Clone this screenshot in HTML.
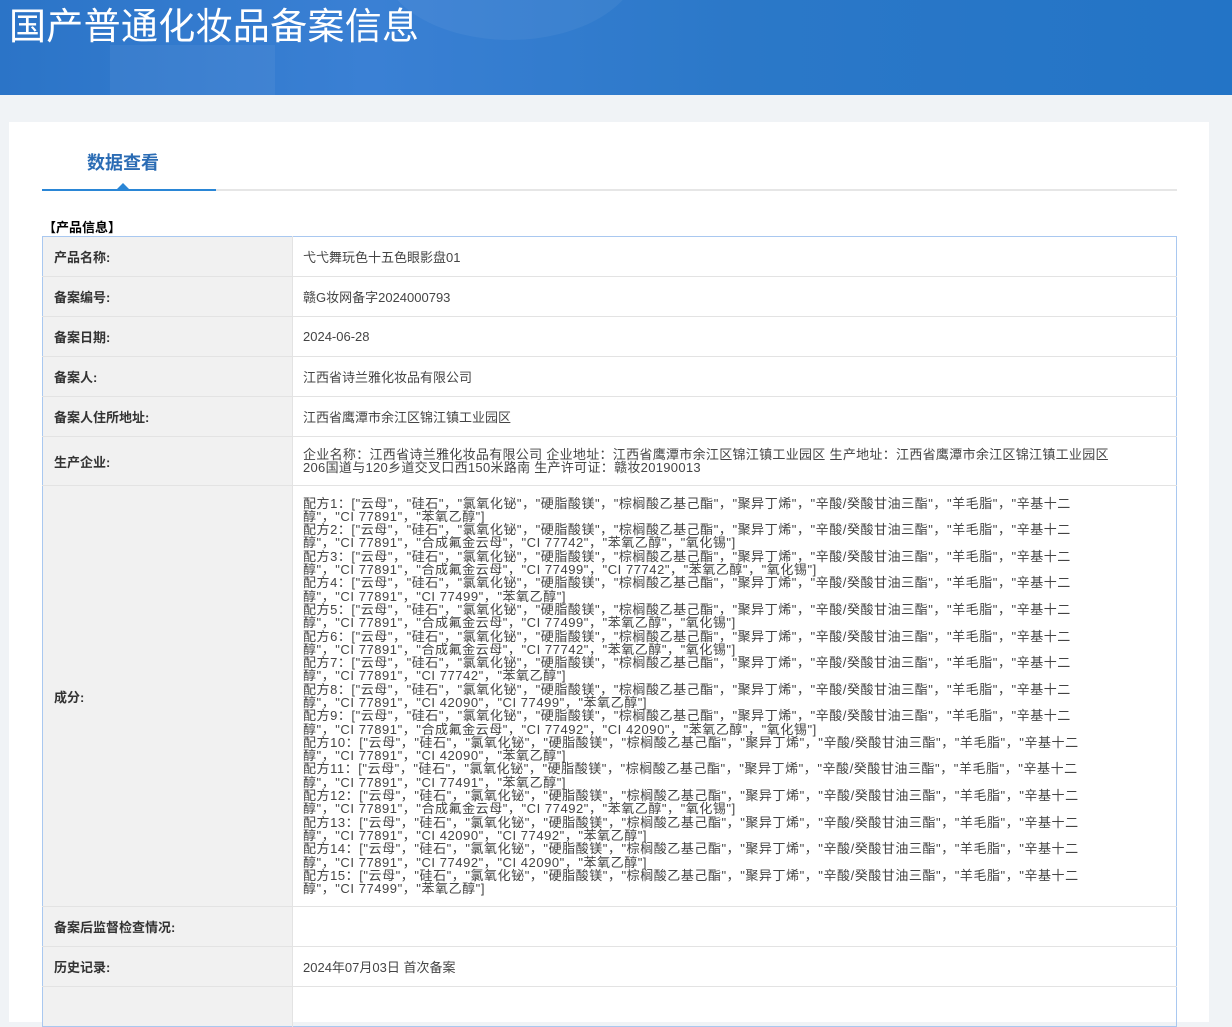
<!DOCTYPE html>
<html><head><meta charset="utf-8"><style>
*{margin:0;padding:0;box-sizing:border-box}
body{width:1232px;height:989px;overflow:hidden;background:#f0f3f6;font-family:"Liberation Sans","Noto Sans CJK SC",sans-serif;color:#333}
.hd{position:absolute;left:0;top:0;width:1232px;height:95px;background:linear-gradient(90deg,#2b74c7 0%,#3a80d4 30%,#2b78c8 60%,#2374c6 100%);overflow:hidden}
.hd .c1{position:absolute;left:380px;top:-120px;width:260px;height:160px;border-radius:50%;background:rgba(255,255,255,0.05)}
.hd .c2{position:absolute;left:110px;top:45px;width:165px;height:60px;background:rgba(255,255,255,0.05)}
.hd h1{position:absolute;left:9px;top:-4px;font-size:37px;font-weight:normal;color:#fff;white-space:nowrap;letter-spacing:0.3px}
.card{position:absolute;left:9px;top:122px;width:1200px;height:900px;background:#fff}
.tab{position:absolute;left:78px;top:27px;font-size:18px;font-weight:bold;color:#2b6cb4}
.line{position:absolute;left:33px;top:67px;width:1135px;height:2px;background:#e6e6e6}
.line b{position:absolute;left:0;top:0;width:174px;height:2px;background:#2a86d6}
.tri{position:absolute;left:108px;top:61px;width:0;height:0;border-left:6px solid transparent;border-right:6px solid transparent;border-bottom:6px solid #2a86d6}
.sec{position:absolute;left:34px;top:95px;font-size:13px;font-weight:bold;color:#000}
table{position:absolute;left:33px;top:114px;width:1135px;border-collapse:collapse;border:1px solid #a9c8f0;font-size:13px}
td{border-top:1px solid #e3e3e3;height:40px;vertical-align:middle}
td.l{width:250px;background:#f1f1f1;font-weight:bold;padding-left:11px;color:#333;border-right:1px solid #e3e3e3}
td.v{padding-left:10px;color:#444}
.ml{line-height:13.3px;padding-top:10px;padding-bottom:10px;white-space:nowrap;letter-spacing:0.55px}
</style></head><body>
<div class="hd"><div class="c1"></div><div class="c2"></div><h1>国产普通化妆品备案信息</h1></div>
<div class="card">
<div class="tab">数据查看</div>
<div class="line"><b></b></div><div class="tri"></div>
<div class="sec">【产品信息】</div>
<table>
<tr><td class="l" style="border-top:none">产品名称:</td><td class="v" style="border-top:none">弋弋舞玩色十五色眼影盘01</td></tr>
<tr><td class="l">备案编号:</td><td class="v">赣G妆网备字2024000793</td></tr>
<tr><td class="l">备案日期:</td><td class="v">2024-06-28</td></tr>
<tr><td class="l">备案人:</td><td class="v">江西省诗兰雅化妆品有限公司</td></tr>
<tr><td class="l">备案人住所地址:</td><td class="v">江西省鹰潭市余江区锦江镇工业园区</td></tr>
<tr><td class="l" style="height:49px">生产企业:</td><td class="v ml" style="letter-spacing:0.3px">企业名称：江西省诗兰雅化妆品有限公司 企业地址：江西省鹰潭市余江区锦江镇工业园区 生产地址：江西省鹰潭市余江区锦江镇工业园区<br>206国道与120乡道交叉口西150米路南 生产许可证：赣妆20190013</td></tr>
<tr><td class="l" style="height:421px">成分:</td><td class="v ml">
配方1：["云母"，"硅石"，"氯氧化铋"，"硬脂酸镁"，"棕榈酸乙基己酯"，"聚异丁烯"，"辛酸/癸酸甘油三酯"，"羊毛脂"，"辛基十二<br>醇"，"CI 77891"，"苯氧乙醇"]<br>
配方2：["云母"，"硅石"，"氯氧化铋"，"硬脂酸镁"，"棕榈酸乙基己酯"，"聚异丁烯"，"辛酸/癸酸甘油三酯"，"羊毛脂"，"辛基十二<br>醇"，"CI 77891"，"合成氟金云母"，"CI 77742"，"苯氧乙醇"，"氧化锡"]<br>
配方3：["云母"，"硅石"，"氯氧化铋"，"硬脂酸镁"，"棕榈酸乙基己酯"，"聚异丁烯"，"辛酸/癸酸甘油三酯"，"羊毛脂"，"辛基十二<br>醇"，"CI 77891"，"合成氟金云母"，"CI 77499"，"CI 77742"，"苯氧乙醇"，"氧化锡"]<br>
配方4：["云母"，"硅石"，"氯氧化铋"，"硬脂酸镁"，"棕榈酸乙基己酯"，"聚异丁烯"，"辛酸/癸酸甘油三酯"，"羊毛脂"，"辛基十二<br>醇"，"CI 77891"，"CI 77499"，"苯氧乙醇"]<br>
配方5：["云母"，"硅石"，"氯氧化铋"，"硬脂酸镁"，"棕榈酸乙基己酯"，"聚异丁烯"，"辛酸/癸酸甘油三酯"，"羊毛脂"，"辛基十二<br>醇"，"CI 77891"，"合成氟金云母"，"CI 77499"，"苯氧乙醇"，"氧化锡"]<br>
配方6：["云母"，"硅石"，"氯氧化铋"，"硬脂酸镁"，"棕榈酸乙基己酯"，"聚异丁烯"，"辛酸/癸酸甘油三酯"，"羊毛脂"，"辛基十二<br>醇"，"CI 77891"，"合成氟金云母"，"CI 77742"，"苯氧乙醇"，"氧化锡"]<br>
配方7：["云母"，"硅石"，"氯氧化铋"，"硬脂酸镁"，"棕榈酸乙基己酯"，"聚异丁烯"，"辛酸/癸酸甘油三酯"，"羊毛脂"，"辛基十二<br>醇"，"CI 77891"，"CI 77742"，"苯氧乙醇"]<br>
配方8：["云母"，"硅石"，"氯氧化铋"，"硬脂酸镁"，"棕榈酸乙基己酯"，"聚异丁烯"，"辛酸/癸酸甘油三酯"，"羊毛脂"，"辛基十二<br>醇"，"CI 77891"，"CI 42090"，"CI 77499"，"苯氧乙醇"]<br>
配方9：["云母"，"硅石"，"氯氧化铋"，"硬脂酸镁"，"棕榈酸乙基己酯"，"聚异丁烯"，"辛酸/癸酸甘油三酯"，"羊毛脂"，"辛基十二<br>醇"，"CI 77891"，"合成氟金云母"，"CI 77492"，"CI 42090"，"苯氧乙醇"，"氧化锡"]<br>
配方10：["云母"，"硅石"，"氯氧化铋"，"硬脂酸镁"，"棕榈酸乙基己酯"，"聚异丁烯"，"辛酸/癸酸甘油三酯"，"羊毛脂"，"辛基十二<br>醇"，"CI 77891"，"CI 42090"，"苯氧乙醇"]<br>
配方11：["云母"，"硅石"，"氯氧化铋"，"硬脂酸镁"，"棕榈酸乙基己酯"，"聚异丁烯"，"辛酸/癸酸甘油三酯"，"羊毛脂"，"辛基十二<br>醇"，"CI 77891"，"CI 77491"，"苯氧乙醇"]<br>
配方12：["云母"，"硅石"，"氯氧化铋"，"硬脂酸镁"，"棕榈酸乙基己酯"，"聚异丁烯"，"辛酸/癸酸甘油三酯"，"羊毛脂"，"辛基十二<br>醇"，"CI 77891"，"合成氟金云母"，"CI 77492"，"苯氧乙醇"，"氧化锡"]<br>
配方13：["云母"，"硅石"，"氯氧化铋"，"硬脂酸镁"，"棕榈酸乙基己酯"，"聚异丁烯"，"辛酸/癸酸甘油三酯"，"羊毛脂"，"辛基十二<br>醇"，"CI 77891"，"CI 42090"，"CI 77492"，"苯氧乙醇"]<br>
配方14：["云母"，"硅石"，"氯氧化铋"，"硬脂酸镁"，"棕榈酸乙基己酯"，"聚异丁烯"，"辛酸/癸酸甘油三酯"，"羊毛脂"，"辛基十二<br>醇"，"CI 77891"，"CI 77492"，"CI 42090"，"苯氧乙醇"]<br>
配方15：["云母"，"硅石"，"氯氧化铋"，"硬脂酸镁"，"棕榈酸乙基己酯"，"聚异丁烯"，"辛酸/癸酸甘油三酯"，"羊毛脂"，"辛基十二<br>醇"，"CI 77499"，"苯氧乙醇"]
</td></tr>
<tr><td class="l">备案后监督检查情况:</td><td class="v"></td></tr>
<tr><td class="l">历史记录:</td><td class="v">2024年07月03日 首次备案</td></tr>
<tr><td class="l"></td><td class="v"></td></tr>
</table>
</div>
</body></html>
